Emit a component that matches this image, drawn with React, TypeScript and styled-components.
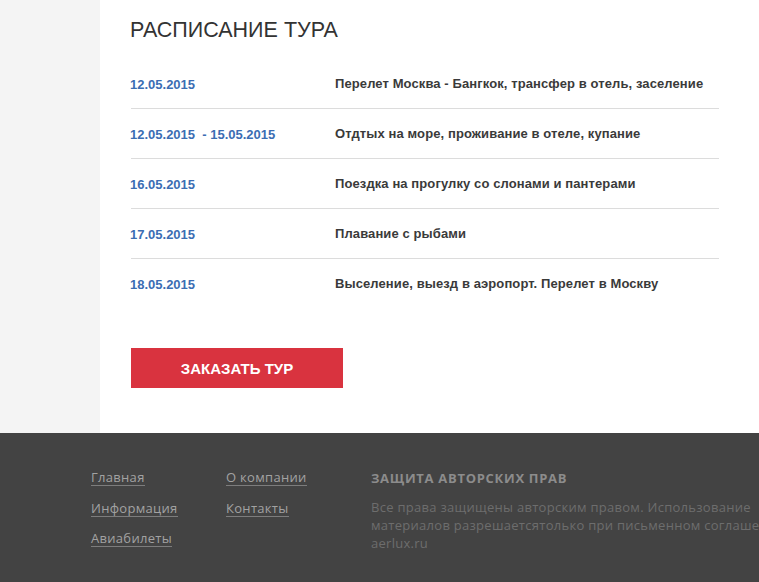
import React from "react";
import styled, { createGlobalStyle } from "styled-components";

const GlobalStyle = createGlobalStyle`
  html, body {
    margin: 0;
    padding: 0;
    background: #ffffff;
    overflow-x: hidden;
  }
  * { box-sizing: border-box; }
`;

const Page = styled.div`
  width: 759px;
  overflow: hidden;
`;

const Main = styled.div`
  display: flex;
`;

const Aside = styled.div`
  width: 100px;
  flex: 0 0 100px;
  background: #f4f4f4;
`;

const Content = styled.section`
  flex: 1;
  padding: 18px 40px 45px 31px;
  font-family: "Liberation Sans", Arial, sans-serif;
`;

const Title = styled.h2`
  margin: 0 0 17px -1px;
  font-size: 21.5px;
  line-height: 24px;
  font-weight: normal;
  color: #333333;
`;

const Schedule = styled.ul`
  list-style: none;
  margin: 0;
  padding: 0;
`;

const Row = styled.li`
  display: flex;
  align-items: center;
  height: 50px;
  border-bottom: 1px solid #dcdcdc;
  &:last-child {
    border-bottom: none;
    height: 49px;
  }
`;

const DateCell = styled.span`
  width: 205px;
  flex: 0 0 205px;
  margin-left: -1px;
  padding-top: 1px;
  font-size: 13px;
  font-weight: bold;
  color: #3b6db3;
  white-space: pre;
`;

const Event = styled.span`
  font-size: 13px;
  font-weight: bold;
  color: #3a3a3a;
  letter-spacing: 0.1px;
  padding-bottom: 1px;
`;

const OrderButton = styled.button`
  display: block;
  margin-top: 40px;
  width: 212px;
  height: 40px;
  border: none;
  background: #d9333f;
  color: #ffffff;
  font-family: "Liberation Sans", Arial, sans-serif;
  font-size: 15px;
  font-weight: bold;
  cursor: pointer;
`;

const Footer = styled.footer`
  background: #434343;
  height: 149px;
  padding: 37px 0 0 91px;
  display: flex;
  font-family: "Open Sans", sans-serif;
  font-size: 13px;
  overflow: hidden;
`;

const LinkColumn = styled.ul<{ $width: number }>`
  list-style: none;
  margin: -2px 0 0;
  padding: 0;
  width: ${(p) => p.$width}px;
  flex: 0 0 ${(p) => p.$width}px;
`;

const LinkItem = styled.li`
  margin-bottom: 12.5px;
`;

const FooterLink = styled.a`
  display: inline-block;
  line-height: 16px;
  color: #a2a2a2;
  letter-spacing: 0.3px;
  text-decoration: none;
  border-bottom: 1px solid #7d7d7d;
`;

const Copyright = styled.div`
  flex: 0 0 440px;
  width: 440px;
`;

const CopyTitle = styled.h4`
  margin: 0 0 12px;
  font-size: 13px;
  line-height: 16px;
  font-weight: bold;
  letter-spacing: 0.7px;
  color: #8c8c8c;
`;

const CopyText = styled.p`
  margin: 0;
  line-height: 18px;
  letter-spacing: 0.28px;
  color: #6d6d6d;
  white-space: nowrap;
`;

const schedule = [
  { date: "12.05.2015", text: "Перелет Москва - Бангкок, трансфер в отель, заселение" },
  { date: "12.05.2015  - 15.05.2015", text: "Отдтых на море, проживание в отеле, купание" },
  { date: "16.05.2015", text: "Поездка на прогулку со слонами и пантерами" },
  { date: "17.05.2015", text: "Плавание с рыбами" },
  { date: "18.05.2015", text: "Выселение, выезд в аэропорт. Перелет в Москву" },
];

export default function App() {
  return (
    <Page>
      <GlobalStyle />
      <Main>
        <Aside />
        <Content>
          <Title>РАСПИСАНИЕ ТУРА</Title>
          <Schedule>
            {schedule.map((s) => (
              <Row key={s.date + s.text}>
                <DateCell>{s.date}</DateCell>
                <Event>{s.text}</Event>
              </Row>
            ))}
          </Schedule>
          <OrderButton>ЗАКАЗАТЬ ТУР</OrderButton>
        </Content>
      </Main>
      <Footer>
        <LinkColumn $width={135}>
          <LinkItem><FooterLink href="#">Главная</FooterLink></LinkItem>
          <LinkItem><FooterLink href="#">Информация</FooterLink></LinkItem>
          <LinkItem><FooterLink href="#">Авиабилеты</FooterLink></LinkItem>
        </LinkColumn>
        <LinkColumn $width={145}>
          <LinkItem><FooterLink href="#">О компании</FooterLink></LinkItem>
          <LinkItem><FooterLink href="#">Контакты</FooterLink></LinkItem>
        </LinkColumn>
        <Copyright>
          <CopyTitle>ЗАЩИТА АВТОРСКИХ ПРАВ</CopyTitle>
          <CopyText>
            Все права защищены авторским правом. Использование
            <br />
            материалов разрешаетсятолько при письменном соглашении
            <br />
            aerlux.ru
          </CopyText>
        </Copyright>
      </Footer>
    </Page>
  );
}
